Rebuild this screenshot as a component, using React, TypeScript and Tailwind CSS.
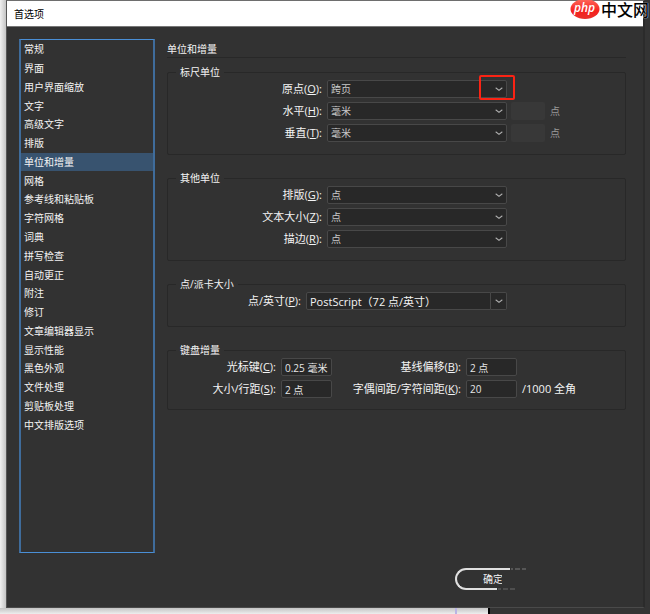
import type { ReactNode } from 'react';
import clsx from 'clsx';

const SECTIONS = [
  '常规',
  '界面',
  '用户界面缩放',
  '文字',
  '高级文字',
  '排版',
  '单位和增量',
  '网格',
  '参考线和粘贴板',
  '字符网格',
  '词典',
  '拼写检查',
  '自动更正',
  '附注',
  '修订',
  '文章编辑器显示',
  '显示性能',
  '黑色外观',
  '文件处理',
  '剪贴板处理',
  '中文排版选项',
];

const ACTIVE = '单位和增量';

function Chevron() {
  return (
    <svg
      className="absolute right-1 top-[7px] w-2 h-[5px] pointer-events-none"
      viewBox="0 0 8 5"
      fill="none"
      stroke="#b0b0b0"
      strokeWidth="1.1"
      strokeLinecap="round"
    >
      <path d="M1 1 L4 3.4 L7 1" />
    </svg>
  );
}

function Label({ id, text, hotkey, className }: { id: string; text: string; hotkey: string; className: string }) {
  return (
    <label htmlFor={id} className={clsx('shrink-0 text-right text-[11px] whitespace-nowrap', className)}>
      {text}(<u className="underline-offset-1">{hotkey}</u>):
    </label>
  );
}

function Group({ title, className, children }: { title: string; className: string; children: ReactNode }) {
  return (
    <fieldset className={clsx('border border-[#282828] rounded-xs flex flex-col', className)}>
      <legend className="ml-2 px-1 h-4 leading-4">{title}</legend>
      <div className="flex flex-col gap-1">{children}</div>
    </fieldset>
  );
}

interface SelectRowProps {
  id: string;
  text: string;
  hotkey: string;
  value: string;
  marked?: boolean;
  custom?: boolean;
}

function SelectRow({ id, text, hotkey, value, marked, custom }: SelectRowProps) {
  return (
    <div className="flex items-center h-[18px]">
      <Label id={id} text={text} hotkey={hotkey} className="w-[154px] mr-[5px]" />
      <div className="relative w-[180px]">
        <select
          id={id}
          className="block appearance-none w-full h-[18px] pl-[3px] leading-4 rounded-xs border border-[#484848] bg-[#282828] text-[#c8c8c8]"
        >
          <option>{value}</option>
        </select>
        <Chevron />
        {marked && (
          <span className="absolute -right-2 -top-[5px] w-9 h-[25px] rounded-xs border-2 border-[#fb2314]" />
        )}
      </div>
      {custom && (
        <label className="flex items-center gap-[5px] ml-1 text-[#999]">
          <input disabled className="w-[34px] h-[18px] rounded-xs bg-[#383838]" />点
        </label>
      )}
    </div>
  );
}

function NumberField({ id, value }: { id: string; value: string }) {
  return (
    <input
      id={id}
      defaultValue={value}
      className="w-[51px] h-[18px] shrink-0 pl-[3px] rounded-xs border border-[#484848] bg-[#282828] text-[#e6e6e6]"
    />
  );
}

function SiteLogo() {
  return (
    <div className="absolute right-px top-0 flex items-start">
      <svg className="w-[30px] h-5" viewBox="0 0 30 20">
        <defs>
          <linearGradient id="logo-red" x1="0" y1="0" x2="0" y2="1">
            <stop offset="0" stopColor="#ff6a5c" />
            <stop offset="0.6" stopColor="#f5201c" />
            <stop offset="1" stopColor="#e8302c" />
          </linearGradient>
        </defs>
        <ellipse cx="15" cy="9" rx="14.5" ry="10" fill="url(#logo-red)" />
        <text
          x="14.5"
          y="12"
          textAnchor="middle"
          fontSize="12"
          fontStyle="italic"
          fontWeight="600"
          fontFamily="'Open Sans', sans-serif"
          fill="#fff"
        >
          php
        </text>
      </svg>
      <span className="ml-px text-base leading-5 font-medium text-black [text-shadow:0_0_1px_#fff,0_0_1px_#fff]">
        中文网
      </span>
    </div>
  );
}

export default function App() {
  return (
    <div className="relative min-h-screen flex flex-col bg-[#e4e4e4] text-[10px] leading-4 text-[#f4f4f4] font-['Open_Sans','Noto_Sans_CJK_SC',sans-serif]">
      <div className="flex-1 flex">
        <div className="w-[6px] shrink-0 bg-linear-to-r from-[#f0f0f0] to-[#c4c4c4]" />
        <main className="flex-1 min-w-0 flex flex-col bg-[#323232] border border-r-2 border-t-[#6e6e6e] border-l-[#555] border-b-[#4a4a4a] border-r-[#2b2b2b]">
          <header className="h-[26px] pl-[7px] flex items-center bg-white border-b border-[#777] text-black">
            首选项
          </header>

          <div className="flex-1 flex pt-3 pl-3 pr-[17px]">
            <nav className="w-[136px] shrink-0 border-x-2 border-y border-x-[#3f6c9b] border-y-[#4a8fd6]">
              <ul className="grid auto-rows-fr h-[394px]">
                {SECTIONS.map((name) => (
                  <li key={name} className={clsx('flex items-center', name === ACTIVE && 'bg-[#38536f]')}>
                    <a href="#" className="pl-[3px] flex-1">
                      {name}
                    </a>
                  </li>
                ))}
              </ul>
            </nav>

            <div className="flex-1 min-w-0 ml-3">
              <h1 className="pt-[2px] h-[19px] border-b border-[#282828]">单位和增量</h1>

              <div className="mt-[6px] flex flex-col gap-[15px]">
                <Group title="标尺单位" className="pb-3">
                  <SelectRow id="origin" text="原点" hotkey="O" value="跨页" marked />
                  <SelectRow id="horizontal" text="水平" hotkey="H" value="毫米" custom />
                  <SelectRow id="vertical" text="垂直" hotkey="T" value="毫米" custom />
                </Group>

                <Group title="其他单位" className="pb-3">
                  <SelectRow id="typeset" text="排版" hotkey="G" value="点" />
                  <SelectRow id="text-size" text="文本大小" hotkey="Z" value="点" />
                  <SelectRow id="stroke" text="描边" hotkey="R" value="点" />
                </Group>

                <Group title="点/派卡大小" className="pb-4">
                  <div className="flex items-center h-[18px]">
                    <Label id="per-inch" text="点/英寸" hotkey="P" className="w-[133px] mr-[5px]" />
                    <div className="relative flex w-[201px]">
                      <input
                        id="per-inch"
                        defaultValue="PostScript（72 点/英寸）"
                        className="flex-1 min-w-0 h-[18px] pl-[3px] text-[11px] rounded-l-xs border border-[#484848] bg-[#282828]"
                      />
                      <button
                        aria-label="点/英寸"
                        className="w-4 h-[18px] rounded-r-xs border border-l-0 border-[#484848] bg-[#282828]"
                      />
                      <Chevron />
                    </div>
                  </div>
                </Group>

                <Group title="键盘增量" className="pb-[11px]">
                  <div className="flex items-center h-[18px] gap-[5px]">
                    <Label id="cursor-key" text="光标键" hotkey="C" className="w-[108px]" />
                    <NumberField id="cursor-key" value="0.25 毫米" />
                    <Label id="baseline" text="基线偏移" hotkey="B" className="w-[124px]" />
                    <NumberField id="baseline" value="2 点" />
                  </div>
                  <div className="flex items-center h-[18px] gap-[5px]">
                    <Label id="leading" text="大小/行距" hotkey="S" className="w-[108px]" />
                    <NumberField id="leading" value="2 点" />
                    <Label id="kerning" text="字偶间距/字符间距" hotkey="K" className="w-[124px]" />
                    <NumberField id="kerning" value="20" />
                    <span className="text-[11px] whitespace-nowrap">/1000 全角</span>
                  </div>
                </Group>
              </div>
            </div>
          </div>

          <footer className="pt-[15px] pb-[17px] pr-[117px] flex justify-end">
            <div className="relative">
              <button className="block w-[71px] h-[22px] pl-[26px] text-left leading-[18px] rounded-l-full border-2 border-r-0 border-[#e0e0e0]">
                确定
              </button>
              {/* worn right half of the button outline */}
              <svg className="absolute left-0 top-0 w-[72px] h-[22px] pointer-events-none" viewBox="0 0 72 22">
                <path d="M55 0 H72 V22 H42 V19 L47 17 V7 L55 3 Z" fill="#323232" />
                <path d="M56 1 H58 M60 1 H65 M67 1 H71" stroke="#7a7a7a" strokeWidth="1" />
                <path d="M43 21 H46 M48 21 H53 M55 21 H60" stroke="#6a6a6a" strokeWidth="1" />
              </svg>
            </div>
          </footer>
        </main>
        <div className="w-[5px] shrink-0 bg-[#343434]" />
      </div>

      <div className="flex h-[6px]">
        <div className="flex-1 flex justify-end bg-linear-to-b from-[#c4c4c4] to-[#eee]">
          <span className="w-[2px] mr-[31px] bg-[#b9b4e4]" />
        </div>
        <div className="w-[162px] border-l-2 border-black bg-[#343434]" />
      </div>

      <SiteLogo />
    </div>
  );
}
